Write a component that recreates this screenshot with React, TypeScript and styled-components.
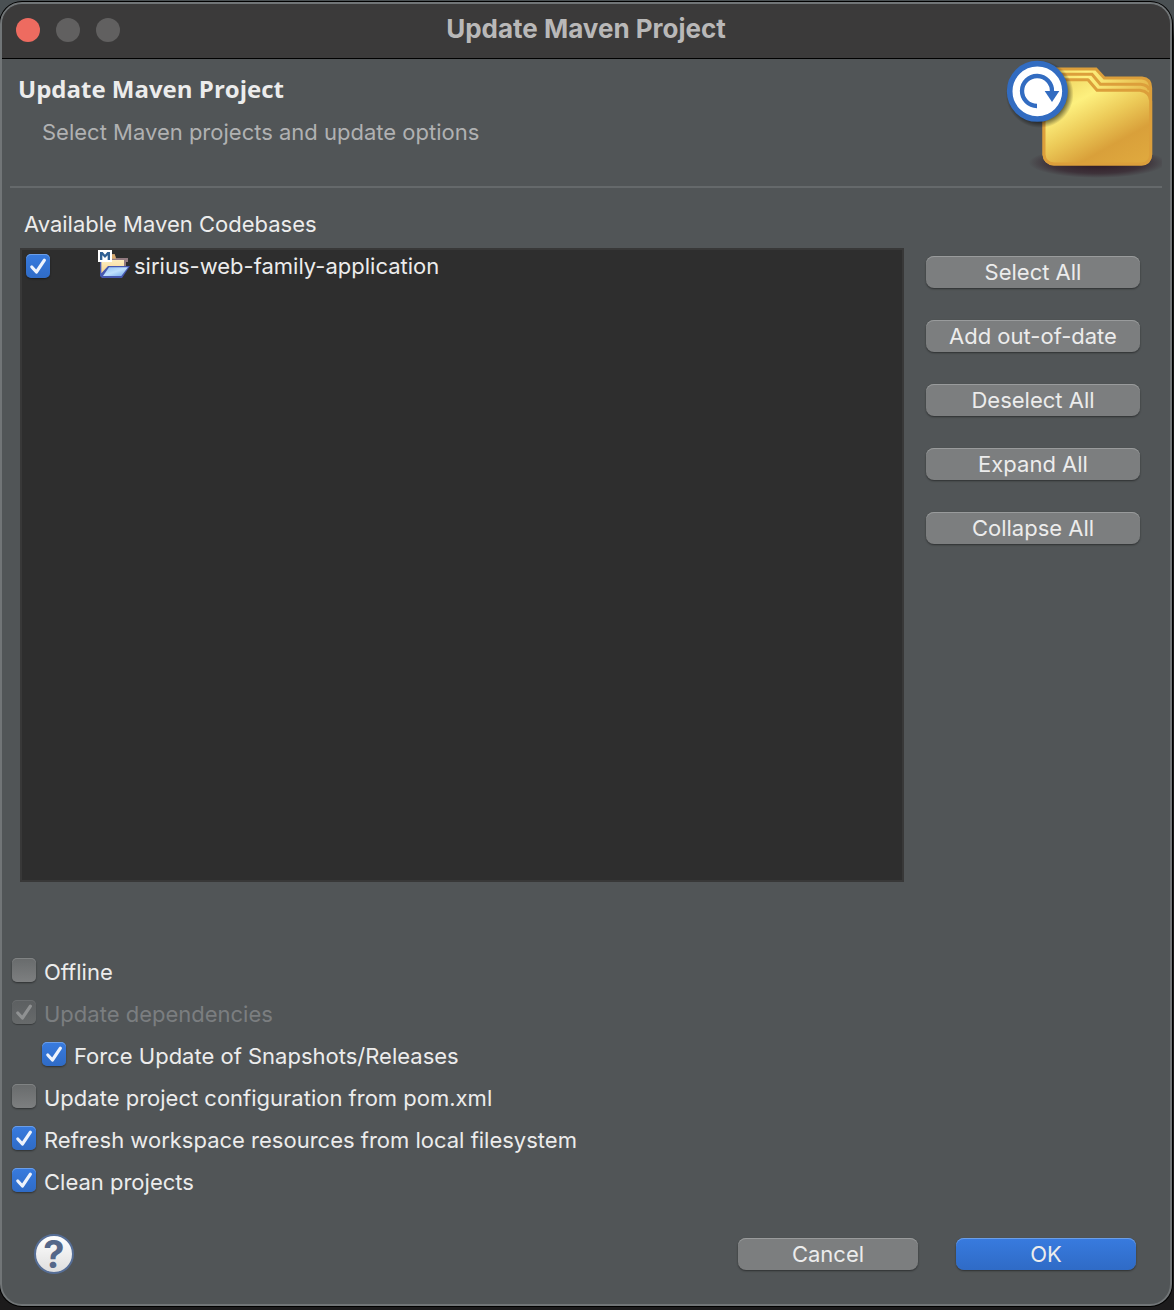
import React, { useId, useState } from "react";
import styled, { createGlobalStyle, css } from "styled-components";

const GlobalStyle = createGlobalStyle`
  *, *::before, *::after { box-sizing: border-box; }
  body {
    margin: 0;
    background: #1c1b1c;
    color: #ececec;
    font-family: Inter, "Liberation Sans", sans-serif;
    font-size: 22px;
    font-weight: 420;
    line-height: 28px;
  }
  h1, h2, p { margin: 0; }
`;

const Desktop = styled.div`
  display: flex;
  min-height: 100vh;
  padding: 2px 2px 4px 0;
  background: linear-gradient(#4a5053 0, #4a5053 16px, #121212 40px, #1c1b1c 100%);
`;

const Window = styled.main`
  display: flex;
  flex: 1;
  flex-direction: column;
  overflow: hidden;
  border: 2px solid #717577;
  border-radius: 22px;
  box-shadow: 0 0 0 1px #000;
  background: #515557;
`;

const TitleBar = styled.header`
  display: grid;
  grid-template-columns: 1fr auto 1fr;
  align-items: center;
  height: 55px;
  padding: 0 14px 3px;
  border-bottom: 1px solid #000;
  background: #3b3a3a;
`;

const WindowControls = styled.div`
  display: flex;
  gap: 16px;
`;

const WindowDot = styled.button<{ $color: string }>`
  width: 24px;
  height: 24px;
  padding: 0;
  border: 0;
  border-radius: 50%;
  background: ${(p) => p.$color};
`;

const WindowTitle = styled.h1`
  padding-bottom: 2px;
  color: #b9b8b8;
  font-size: 26px;
  font-weight: 700;
  line-height: 32px;
`;

const Banner = styled.section`
  display: flex;
  justify-content: space-between;
  height: 129px;
  margin: 0 8px;
  border-bottom: 2px solid #65696b;
`;

const BannerText = styled.div`
  padding: 14px 8px 0;
`;

const BannerTitle = styled.h2`
  font-family: "Open Sans", "Noto Sans", sans-serif;
  font-size: 24px;
  font-weight: 700;
  line-height: 32px;
`;

const BannerHint = styled.p`
  padding: 13px 0 0 24px;
  color: #b0b1b2;
`;

const Codebases = styled.section`
  display: grid;
  flex: 1;
  grid-template-columns: 1fr 214px;
  grid-template-rows: auto 1fr;
  column-gap: 22px;
  padding: 22px 30px 76px 18px;
`;

const CodebasesTitle = styled.h2`
  grid-column: 1 / -1;
  padding: 0 4px 10px;
  font-size: 22px;
  font-weight: inherit;
`;

const ProjectList = styled.div`
  min-height: 200px;
  border: 2px solid #383838;
  background: #2e2e2e;
`;

const ProjectRow = styled.label`
  display: flex;
  align-items: center;
  height: 32px;
  padding: 0 4px;
`;

const ProjectName = styled.span`
  display: flex;
  align-items: center;
  gap: 4px;
  padding-left: 48px;
`;

const SideButtons = styled.div`
  display: flex;
  flex-direction: column;
  gap: 32px;
  padding-top: 8px;
`;

const PushButton = styled.button<{ $primary?: boolean }>`
  height: 32px;
  min-width: 180px;
  padding: 0 8px;
  border: 0;
  border-radius: 8px;
  color: #ececec;
  font: inherit;
  white-space: nowrap;
  ${(p) =>
    p.$primary
      ? css`
          background: linear-gradient(#387bdf, #2f6bc6);
          box-shadow: inset 0 1px 0 #6b9ee8, 0 1px 2px rgba(0, 0, 0, 0.45);
        `
      : css`
          background: #7c7e7f;
          box-shadow: inset 0 1px 0 #999b9c, 0 1px 2px rgba(0, 0, 0, 0.45);
        `}
`;

const Options = styled.section`
  display: flex;
  flex-direction: column;
  align-items: flex-start;
  gap: 14px;
  padding: 0 10px;
`;

const OptionRow = styled.div<{ $nested?: boolean; $disabled?: boolean }>`
  display: flex;
  align-items: flex-start;
  gap: 8px;
  padding-left: ${(p) => (p.$nested ? 30 : 0)}px;
  color: ${(p) => (p.$disabled ? "#7b7e80" : "#ececec")};
`;

const TickFrame = styled.span`
  display: grid;
  flex: none;
  width: 24px;
  height: 24px;
  > * {
    grid-area: 1 / 1;
  }
`;

const TickInput = styled.input`
  appearance: none;
  width: 24px;
  height: 24px;
  margin: 0;
  border-radius: 5px;
  background: linear-gradient(#686b6c, #7d7f80);
  box-shadow: inset 0 1px 0 #808384, 0 1px 2px rgba(0, 0, 0, 0.45);
  &:checked {
    background: linear-gradient(#387bdf, #2f6bc6);
    box-shadow: inset 0 1px 0 #6b9ee8, 0 1px 2px rgba(0, 0, 0, 0.45);
  }
  &:disabled {
    background: linear-gradient(#5c5f61, #676a6b);
    box-shadow: inset 0 1px 0 #696c6e, 0 1px 1px rgba(0, 0, 0, 0.3);
  }
`;

const TickMark = styled.svg`
  pointer-events: none;
`;

const Footer = styled.footer`
  display: flex;
  align-items: center;
  gap: 38px;
  padding: 38px 34px 30px 32px;
`;

const HelpButton = styled.button`
  width: 40px;
  height: 40px;
  margin-right: auto;
  padding: 0;
  border: 2px solid #566e96;
  border-radius: 50%;
  background: linear-gradient(#fff, #dedede);
  color: #546789;
  font: inherit;
  font-size: 38px;
  font-weight: 700;
  line-height: 36px;
`;

type TickProps = {
  id: string;
  checked: boolean;
  disabled?: boolean;
  onChange: (value: boolean) => void;
};

function Tick({ id, checked, disabled, onChange }: TickProps) {
  return (
    <TickFrame>
      <TickInput
        id={id}
        type="checkbox"
        checked={checked}
        disabled={disabled}
        onChange={(e) => onChange(e.target.checked)}
      />
      {checked && (
        <TickMark width="24" height="24" viewBox="0 0 24 24" aria-hidden="true">
          <path
            d="M5.8 13 L10.4 18 L18.4 6.2"
            fill="none"
            stroke={disabled ? "#8f9192" : "#eef3fc"}
            strokeWidth="3.2"
            strokeLinecap="round"
            strokeLinejoin="round"
          />
        </TickMark>
      )}
    </TickFrame>
  );
}

type OptionProps = {
  label: string;
  initial?: boolean;
  disabled?: boolean;
  nested?: boolean;
};

function Option({ label, initial = false, disabled, nested }: OptionProps) {
  const id = useId();
  const [checked, setChecked] = useState(initial);
  return (
    <OptionRow $nested={nested} $disabled={disabled}>
      <Tick id={id} checked={checked} disabled={disabled} onChange={setChecked} />
      <label htmlFor={id}>{label}</label>
    </OptionRow>
  );
}

function FolderRefreshArt() {
  return (
    <svg width="158" height="124" viewBox="42 27 474 372" aria-hidden="true">
      <defs>
        <linearGradient id="folderFront" x1="0.15" y1="0" x2="0.85" y2="1">
          <stop offset="0" stopColor="#f0d663" />
          <stop offset="0.25" stopColor="#fdf07e" />
          <stop offset="0.5" stopColor="#ecca58" />
          <stop offset="0.75" stopColor="#d9a03a" />
          <stop offset="1" stopColor="#dfa83e" />
        </linearGradient>
        <linearGradient id="folderBack" x1="0" y1="0" x2="1" y2="0">
          <stop offset="0" stopColor="#f5dc68" />
          <stop offset="0.4" stopColor="#fdf07e" />
          <stop offset="1" stopColor="#e6b94c" />
        </linearGradient>
        <radialGradient id="groundShade">
          <stop offset="0" stopColor="#2a0f1c" stopOpacity="0.9" />
          <stop offset="0.7" stopColor="#2a0f1c" stopOpacity="0.5" />
          <stop offset="1" stopColor="#2a0f1c" stopOpacity="0" />
        </radialGradient>
        <radialGradient id="badgeShade">
          <stop offset="0.8" stopColor="#000" stopOpacity="0.55" />
          <stop offset="1" stopColor="#000" stopOpacity="0" />
        </radialGradient>
      </defs>
      <ellipse cx="322" cy="338" rx="206" ry="46" fill="url(#groundShade)" />
      <path
        d="M162 90 Q164 57 196 57 H318 L343 84 H456 Q482 86 482 114 V314 Q480 340 454 342 H192 Q164 340 162 314 Z"
        fill="url(#folderBack)"
        stroke="#dc9f3b"
        strokeWidth="9"
      />
      <path
        d="M164 104 Q166 73 196 73 H306 L331 103 H452 Q474 105 478 120"
        fill="none"
        stroke="#dc9f3b"
        strokeWidth="9"
      />
      <path
        d="M162 118 Q164 89 196 89 H294 L321 121 H450 Q480 125 482 153 V314 Q480 342 454 342 H192 Q164 340 162 314 Z"
        fill="url(#folderFront)"
        stroke="#dc9f3b"
        strokeWidth="9"
        strokeLinejoin="round"
      />
      <circle cx="149" cy="132" r="102" fill="url(#badgeShade)" />
      <circle cx="142" cy="124" r="83" fill="#fff" stroke="#326cc1" strokeWidth="17" />
      <path d="M141 168 A45 45 0 1 1 186 125" fill="none" stroke="#326cc1" strokeWidth="13" />
      <path d="M164 123 H208 L186 156 Z" fill="#326cc1" />
    </svg>
  );
}

function MavenProjectIcon() {
  return (
    <svg width="32" height="32" viewBox="24 30 96 96" aria-hidden="true">
      <defs>
        <linearGradient id="openFlap" x1="0" y1="0" x2="1" y2="1">
          <stop offset="0" stopColor="#8fc0f4" />
          <stop offset="0.5" stopColor="#bfe0fd" />
          <stop offset="1" stopColor="#6ea5ea" />
        </linearGradient>
        <linearGradient id="openBack" x1="0" y1="0" x2="0" y2="1">
          <stop offset="0" stopColor="#fdeec0" />
          <stop offset="1" stopColor="#f6cd83" />
        </linearGradient>
      </defs>
      <path d="M60 46 L64 42 H74 L78 54 H114 V66 H108 V82 H60 Z" fill="#927a80" />
      <path d="M64 43 H74 L78 56 H64 Z" fill="#d9ab6c" />
      <path d="M32 60 H102 V82 H56 L38 108 H32 Z" fill="url(#openBack)" />
      <path d="M30 64 H34 V100 L54 78 H120 L96 114 H36 L30 108 Z" fill="#4658b0" />
      <path d="M57 82 H114 L94 108 H39 Z" fill="url(#openFlap)" />
      <rect x="24" y="30" width="42" height="36" fill="#fff" />
      <path d="M30 60 V36 H38 L45 44 L52 36 H60 V60 H53 V46 L45 54 L37 46 V60 Z" fill="#2f5f93" />
    </svg>
  );
}

const sideActions = ["Select All", "Add out-of-date", "Deselect All", "Expand All", "Collapse All"];

export default function App() {
  const [projectChecked, setProjectChecked] = useState(true);
  return (
    <>
      <GlobalStyle />
      <Desktop>
        <Window>
          <TitleBar>
            <WindowControls>
              <WindowDot $color="#ee6b60" aria-label="Close" />
              <WindowDot $color="#616060" aria-label="Minimize" disabled />
              <WindowDot $color="#616060" aria-label="Zoom" disabled />
            </WindowControls>
            <WindowTitle>Update Maven Project</WindowTitle>
          </TitleBar>

          <Banner>
            <BannerText>
              <BannerTitle>Update Maven Project</BannerTitle>
              <BannerHint>Select Maven projects and update options</BannerHint>
            </BannerText>
            <FolderRefreshArt />
          </Banner>

          <Codebases>
            <CodebasesTitle>Available Maven Codebases</CodebasesTitle>
            <ProjectList>
              <ProjectRow htmlFor="project-0">
                <Tick id="project-0" checked={projectChecked} onChange={setProjectChecked} />
                <ProjectName>
                  <MavenProjectIcon />
                  sirius-web-family-application
                </ProjectName>
              </ProjectRow>
            </ProjectList>
            <SideButtons>
              {sideActions.map((action) => (
                <PushButton key={action} type="button">
                  {action}
                </PushButton>
              ))}
            </SideButtons>
          </Codebases>

          <Options>
            <Option label="Offline" />
            <Option label="Update dependencies" initial disabled />
            <Option label="Force Update of Snapshots/Releases" initial nested />
            <Option label="Update project configuration from pom.xml" />
            <Option label="Refresh workspace resources from local filesystem" initial />
            <Option label="Clean projects" initial />
          </Options>

          <Footer>
            <HelpButton type="button" aria-label="Help">
              ?
            </HelpButton>
            <PushButton type="button">Cancel</PushButton>
            <PushButton type="button" $primary>
              OK
            </PushButton>
          </Footer>
        </Window>
      </Desktop>
    </>
  );
}
